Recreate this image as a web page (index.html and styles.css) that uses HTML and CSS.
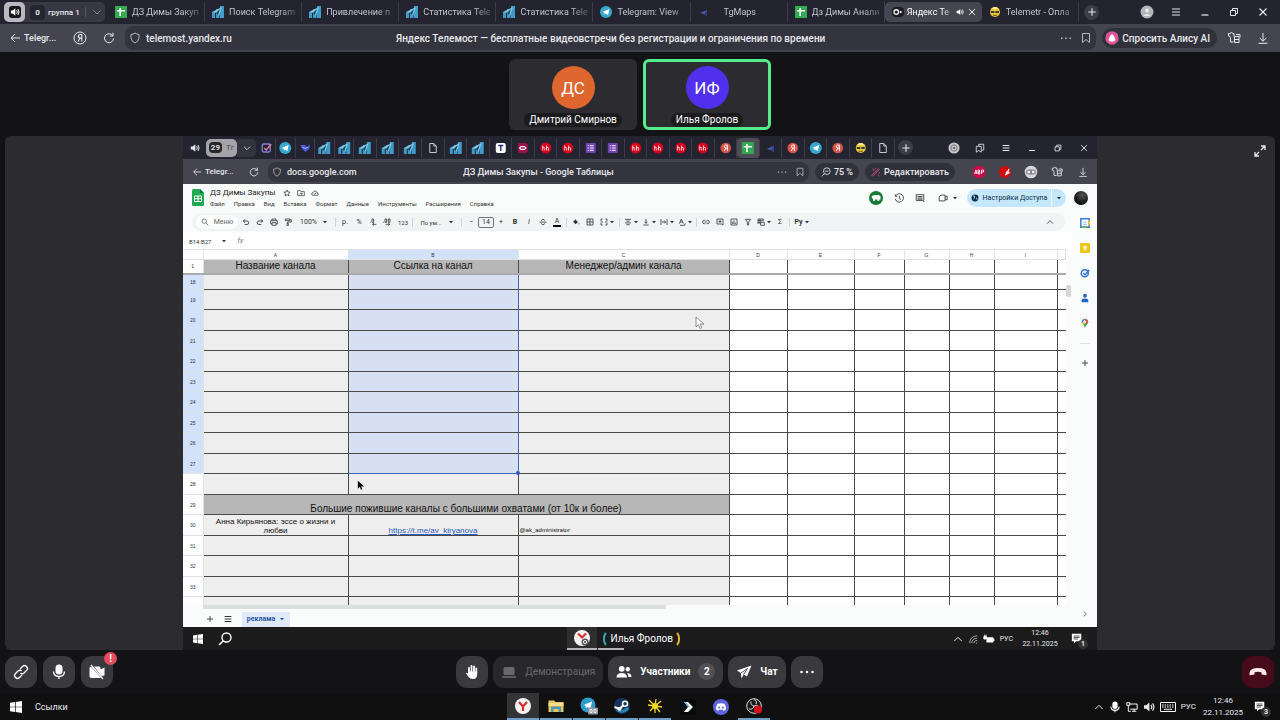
FILE: index.html
```html
<!DOCTYPE html>
<html lang="ru">
<head>
  <meta charset="UTF-8">
  <meta name="viewport" content="width=device-width, initial-scale=1.0">
  <title>Яндекс Телемост</title>
  <link rel="stylesheet" href="styles.css">
</head>
<body>

<!-- Набор иконок -->
<svg class="sprite" aria-hidden="true">
  <symbol id="i-speaker" viewBox="0 0 12 12"><path d="M1 4.2h2.2L6.4 1.5v9L3.2 7.8H1z" fill="currentColor"/><path d="M8 3.8q1.6 2.2 0 4.4M9.6 2.4q2.6 3.6 0 7.2" fill="none" stroke="currentColor" stroke-width="1.2"/></symbol>
  <symbol id="i-chev" viewBox="0 0 12 12"><path d="M2.5 4.5 6 8l3.5-3.5" fill="none" stroke="currentColor"/></symbol>
  <symbol id="i-up" viewBox="0 0 12 12"><path d="M1.5 8.5 6 4l4.5 4.5" fill="none" stroke="currentColor" stroke-width="1.2"/></symbol>
  <symbol id="i-sheet" viewBox="0 0 12 12"><path d="M0 0h12v12H0z" fill="#35a853"/><path d="M5.2 2v8M2 4.8h8" stroke="#fff" stroke-width="1.6"/></symbol>
  <symbol id="i-stat" viewBox="0 0 12 12"><path d="M0 6h3v6H0zM4 3h3.500v9H4zM8 0h4v12H8z" fill="#3f9cc9"/><path d="M0 6 10 1 7 10 5 7z" fill="#7cc8e8"/><path d="m4 7 4-4-2 6z" fill="#17425c"/></symbol>
  <symbol id="i-tg" viewBox="0 0 12 12"><circle cx="6" cy="6" r="6" fill="#35a9cf"/><path d="m2.3 6 7-3-1.2 6.3-2.3-1.8-1.1 1.1-.3-2z" fill="#fff"/></symbol>
  <symbol id="i-plane" viewBox="0 0 12 12"><path d="m2 7 7-3v6L6 8z" fill="#4a61b0"/><path d="m6 8 3-4v6z" fill="#2d3d82"/></symbol>
  <symbol id="i-tele" viewBox="0 0 12 12"><rect y="1" width="12" height="10" rx="4" fill="#1b1b20"/><circle cx="4.3" cy="6" r="2.300" fill="none" stroke="#eee" stroke-width="1.4"/><path d="M1 6h1.500M8 4.700 10.500 6 8 7.300z" fill="#fff"/></symbol>
  <symbol id="i-face" viewBox="0 0 12 12"><circle cx="6" cy="6" r="5" fill="#e8c93c"/><path d="M2 5h3.500v2H2zM6.500 5H10v2H6.500z" fill="#383838"/><path d="M4 9q2 1 4 0" stroke="#6b5410" fill="none"/><path d="M2 3q4-4 8 0z" fill="#fff0a0"/></symbol>
  <symbol id="i-plus" viewBox="0 0 12 12"><path d="M6 1.500v9M1.500 6h9" stroke="currentColor" stroke-width="1.300"/></symbol>
  <symbol id="i-user" viewBox="0 0 14 14"><circle cx="7" cy="7" r="6.500" fill="#b4b4bc"/><circle cx="7" cy="5.500" r="2" fill="#e7e7ec"/><path d="M3.200 11q3.800-4 7.600 0z" fill="#e7e7ec"/></symbol>
  <symbol id="i-menu" viewBox="0 0 12 12"><path d="M2 3h8M2 6h8M2 9h8" stroke="currentColor" stroke-width="1.200"/></symbol>
  <symbol id="i-min" viewBox="0 0 12 12"><path d="M2.500 9h7" stroke="currentColor" stroke-width="1.200"/></symbol>
  <symbol id="i-rest" viewBox="0 0 12 12"><path d="M2.500 4.500h5v5h-5zM4.500 4.500v-2h5v5h-2" fill="none" stroke="currentColor"/></symbol>
  <symbol id="i-x" viewBox="0 0 12 12"><path d="m2.500 2.500 7 7m0-7-7 7" stroke="currentColor" stroke-width="1.100"/></symbol>
  <symbol id="i-back" viewBox="0 0 12 12"><path d="M11 6H2m4-4L2 6l4 4" fill="none" stroke="currentColor"/></symbol>
  <symbol id="i-ya" viewBox="0 0 14 14"><circle cx="7" cy="7" r="6" fill="none" stroke="currentColor"/><path d="M8.800 10.500v-7H7.300Q5.200 3.600 5.200 5.400 5.300 7.200 8.800 7.200M7 7l-2 3.500" fill="none" stroke="currentColor" stroke-width="1.100"/></symbol>
  <symbol id="i-reload" viewBox="0 0 12 12"><path d="M10.500 6.500A4.500 4.500 0 1 1 8.800 2.700L10 4M10 .8V4H6.800" fill="none" stroke="currentColor"/></symbol>
  <symbol id="i-shield" viewBox="0 0 12 12"><path d="M6 1q2 1.500 4 1.500v3.300Q9.700 9.500 6 11 2.300 9.500 2 5.800V2.500Q4 2.500 6 1z" fill="none" stroke="currentColor"/></symbol>
  <symbol id="i-mark" viewBox="0 0 12 12"><path d="M2.500 1.500h7v9L6 7.500l-3.500 3z" fill="none" stroke="currentColor"/></symbol>
  <symbol id="i-dots" viewBox="0 0 12 12"><path d="M1 5.500h1.500v1.500H1zM5.200 5.500h1.500v1.500H5.200zM9.500 5.500H11v1.500H9.500z" fill="currentColor"/></symbol>
  <symbol id="i-alice" viewBox="0 0 14 14"><circle cx="7" cy="7" r="6.700" fill="#dc5596"/><path d="M7 3.200q1 0 2.800 3.700 2 3.600-2.800 3.600T4.200 6.900Q6 3.200 7 3.200z" fill="#fff"/></symbol>
  <symbol id="i-ext" viewBox="0 0 14 14"><path d="M1.500 2.500h2a1 1 0 0 1 2 0h1.500v3M1.500 2.500v2.500q2 0 2 1.500V11h3M7.500 5.500H12v6H7.500zM7.500 8.500H12M9 3.500h4v3" fill="none" stroke="currentColor"/></symbol>
  <symbol id="i-down" viewBox="0 0 12 12"><path d="M6 1v8M2.700 6 6 9.200 9.300 6M1.500 11.300h9" fill="none" stroke="currentColor"/></symbol>
  <symbol id="i-expand" viewBox="0 0 12 12"><path d="M7 1h4v4M11 1 7 5M5 11H1V7m0 4 4-4" fill="none" stroke="currentColor" stroke-width="1.300"/></symbol>
  <symbol id="i-file" viewBox="0 0 12 12"><path d="M3 1.500h4L9.500 4v6.500H3zM7 1.500V4h2.500" fill="none" stroke="#c9c9cf"/></symbol>
  <symbol id="i-t" viewBox="0 0 12 12"><rect x="1" y="1" width="10" height="10" rx="2" fill="#fff"/><path d="M3.500 3.500h5M6 3.500v5.500" stroke="#27277c" stroke-width="1.400"/></symbol>
  <symbol id="i-pink" viewBox="0 0 12 12"><rect x="1" y="1" width="10" height="10" rx="2" fill="#98104c"/><path d="m2 6 2-2h4l2 2-2 2H4z" fill="#fff"/><path d="M4 6h4" stroke="#98104c" stroke-width="1.500"/></symbol>
  <symbol id="i-hh" viewBox="0 0 12 12"><circle cx="6" cy="6" r="5.500" fill="#d6001c"/><path d="M3 3.500v5M3 6q2-1.500 2 .5v2M6.800 3.500v5M6.800 6q2-1.500 2 .5v2" fill="none" stroke="#fff" stroke-width=".8"/></symbol>
  <symbol id="i-form" viewBox="0 0 12 12"><rect x="1" y="1" width="10" height="10" rx="1" fill="#6f42b5"/><path d="M3 3.700h1M5 3.700h4M3 6h1M5 6h4M3 8.300h1M5 8.300h4" stroke="#fff"/></symbol>
  <symbol id="i-yared" viewBox="0 0 12 12"><circle cx="6" cy="6" r="5.300" fill="#d9534a"/><path d="M7.600 9V3H6.200Q4.500 3.200 4.500 4.700T7.600 6.200M6 6.200 4.500 9" fill="none" stroke="#fff"/></symbol>
  <symbol id="i-check" viewBox="0 0 12 12"><rect x="2" y="2" width="8" height="8" rx="1.500" fill="none" stroke="#8a83e0" stroke-width="1.300"/><path d="m4 6 2 2 5-6" fill="none" stroke="#e87c9b" stroke-width="1.300"/></symbol>
  <symbol id="i-bird" viewBox="0 0 12 12"><path d="M1 3h5l2 2 3-3-1 5-4 3-3-3z" fill="#4757d6"/><path d="M3 5q3 3 6 0" stroke="#a3b1ff" fill="none"/></symbol>
  <symbol id="i-group" viewBox="0 0 12 12"><path d="M4.500 4V1.500h6v7H8.500M1.500 4h6v7L4.500 9l-3 2z" fill="none" stroke="currentColor"/></symbol>
  <symbol id="i-round" viewBox="0 0 14 14"><circle cx="7" cy="7" r="6.500" fill="#c8c8cc"/><circle cx="7" cy="7" r="3.700" fill="none" stroke="#65656d"/><circle cx="7" cy="7" r="1.400" fill="#65656d"/></symbol>
  <symbol id="i-zoom" viewBox="0 0 12 12"><circle cx="7" cy="5" r="4" fill="none" stroke="currentColor"/><path d="M4.200 8 1 11.300M5 5h4" stroke="currentColor"/></symbol>
  <symbol id="i-wand" viewBox="0 0 12 12"><path d="m1 10 8-8 1 1-8 8zM2 2l2 3M5 1v2M8 9l2 2M9 7h2" fill="none" stroke="#c9508c"/></symbol>
  <symbol id="i-abp" viewBox="0 0 14 14"><path d="M4 1h6l3 3v6l-3 3H4l-3-3V4z" fill="#c70d47"/><path d="M2.500 9 4 5l1 4M3 8h2M6 9V5h1.500v2H6h1.800v2zM9.500 9V5h2v2h-2" fill="none" stroke="#fff" stroke-width=".8"/></symbol>
  <symbol id="i-red" viewBox="0 0 14 14"><circle cx="7" cy="7" r="6" fill="#d30909"/><path d="m7 10 4.500-2.500M8 8.500 11 7M9.500 7l1.500-3M8.500 6.500l-.5 3" fill="none" stroke="#fff" stroke-width="1.300"/></symbol>
  <symbol id="i-mask" viewBox="0 0 14 14"><circle cx="7" cy="7" r="6.300" fill="#d8d8dc"/><rect x="2" y="4.500" width="10" height="5" rx="2.500" fill="#85858d"/><circle cx="4.700" cy="7" r="1.300" fill="#fff"/><circle cx="9.300" cy="7" r="1.300" fill="#fff"/></symbol>
  <symbol id="i-star" viewBox="0 0 12 12"><path d="m6 1.500 1.400 3 3.300.3-2.500 2.200.8 3.300L6 8.600l-3 1.700.8-3.300L1.300 4.800l3.300-.3z" fill="none" stroke="currentColor"/></symbol>
  <symbol id="i-folder" viewBox="0 0 12 12"><path d="M1 2.500h4l1 1.500h5v6H1zM4 7h4M6.500 5.500 8 7 6.500 8.500" fill="none" stroke="currentColor"/></symbol>
  <symbol id="i-cloud" viewBox="0 0 12 12"><path d="M3.500 9.500q-2.500 0-2.500-2T3.300 5.300Q4 3 6.200 3T9 5.700q2 .2 2 2t-2 1.800zM4.200 6.800l1.300 1.200 2.300-2.500" fill="none" stroke="currentColor"/></symbol>
  <symbol id="i-gsheet" viewBox="0 0 12 17"><path d="M1.500 0H8l4 4v11.500q0 1.500-1.500 1.500h-9Q0 17 0 15.500v-14Q0 0 1.500 0z" fill="#1faa53"/><path d="M8 0v4h4z" fill="#0b7a38"/><path d="M2.500 7h7v5.500h-7zM2.500 9.700h7M6 7v5.500" fill="none" stroke="#fff"/></symbol>
  <symbol id="i-hist" viewBox="0 0 12 12"><path d="M2 3.500a5 5 0 1 1-.5 3.500M1.500 1.500V4H4M6.500 3.500V6.500l2 1.300" fill="none" stroke="currentColor"/></symbol>
  <symbol id="i-cmt" viewBox="0 0 12 12"><path d="M1.500 2h9v8.500L8.800 9H1.500zM3 4.200h6M3 6h6M3 7.500h6" fill="none" stroke="currentColor"/></symbol>
  <symbol id="i-meet" viewBox="0 0 12 12"><path d="M1.500 9.500V4.500l2-2h5v7zM8.500 5l2.500-1.500v5L8.500 7" fill="none" stroke="currentColor"/></symbol>
  <symbol id="i-pig" viewBox="0 0 14 14"><circle cx="7" cy="7" r="7" fill="#187a35"/><path d="M2.500 6q1-2 3-2h3q2.500-.5 3.200 2l-.2 2.500h-1L10 10H8.500L8.200 8.500H6L5.800 10H4.300L4 8.300z" fill="#fff"/></symbol>
  <symbol id="i-globe" viewBox="0 0 12 12"><circle cx="6" cy="6" r="5.200" fill="#0b2c46"/><path d="M3 3q3-1 2.500 1.500T3.500 8M7.500 6q2 0 1.500 2.500" fill="none" stroke="#c2e7ff" stroke-width="1.300"/></symbol>
  <symbol id="i-caret" viewBox="0 0 6 6"><path d="M1 2h4L3 4.200z" fill="currentColor"/></symbol>
  <symbol id="i-search" viewBox="0 0 12 12"><circle cx="4.800" cy="4.800" r="3.300" fill="none" stroke="currentColor" stroke-width="1.200"/><path d="M7.300 7.300 11 11" stroke="currentColor" stroke-width="1.200"/></symbol>
  <symbol id="i-undo" viewBox="0 0 12 12"><path d="M2 4.500h5.500a2.600 2.600 0 0 1 0 5.200H4M4.500 2 2 4.500 4.500 7" fill="none" stroke="currentColor" stroke-width="1.300"/></symbol>
  <symbol id="i-redo" viewBox="0 0 12 12"><path d="M10 4.500H4.500a2.600 2.600 0 0 0 0 5.200H8M7.500 2 10 4.500 7.500 7" fill="none" stroke="currentColor" stroke-width="1.300"/></symbol>
  <symbol id="i-print" viewBox="0 0 12 12"><path d="M3 4V1.500h6V4M3 9H1V4h10v5H9M3 7h6v4H3z" fill="none" stroke="currentColor" stroke-width="1.200"/></symbol>
  <symbol id="i-paint" viewBox="0 0 12 12"><path d="M2 1.500h7V4H2zM9 2.700h2V6H5.500v2M4.500 8h2v3.500h-2z" fill="none" stroke="currentColor" stroke-width="1.200"/></symbol>
  <symbol id="i-strike" viewBox="0 0 12 12"><path d="M1 6.200h10M8.500 4Q8 2 6 2T3.700 4M3.500 8Q4 10 6 10t2.500-2" fill="none" stroke="currentColor" stroke-width="1.200"/></symbol>
  <symbol id="i-fill" viewBox="0 0 12 12"><path d="m4 1 5 5-3.500 3.500-4-4L6 2z" fill="currentColor"/><path d="M10.500 7q1.500 2 0 2.500T10.500 7z" fill="currentColor"/></symbol>
  <symbol id="i-grid" viewBox="0 0 12 12"><path d="M1.500 1.500h9v9h-9zM6 1.500v9M1.500 6h9" fill="none" stroke="currentColor" stroke-width="1.200"/></symbol>
  <symbol id="i-merge" viewBox="0 0 12 12"><path d="M4 1.500H1.500v3M8 1.500h2.500v3M4 10.500H1.500v-3M8 10.500h2.500v-3M1 6h3.500M11 6H7.500" fill="none" stroke="currentColor" stroke-width="1.200"/></symbol>
  <symbol id="i-align" viewBox="0 0 12 12"><path d="M1.500 2h9M3.500 4.700h5M1.500 7.400h9M3.500 10h5" stroke="currentColor" stroke-width="1.200"/></symbol>
  <symbol id="i-valign" viewBox="0 0 12 12"><path d="M2 10.500h8M6 1.500V8M3.800 6 6 8l2.200-2" fill="none" stroke="currentColor" stroke-width="1.200"/></symbol>
  <symbol id="i-wrap" viewBox="0 0 12 12"><path d="M1.500 1.500v9M10.500 1.500v9M3 6h5M6.500 4l2 2-2 2" fill="none" stroke="currentColor" stroke-width="1.200"/></symbol>
  <symbol id="i-rot" viewBox="0 0 12 12"><path d="m2 8.500 3-7 3 7M3 6h4M3 11h7l1-3" fill="none" stroke="currentColor" stroke-width="1.200"/></symbol>
  <symbol id="i-dec" viewBox="0 0 12 12"><path d="M1.500 6.500h1M4.500 1.500h2.500v5H4.500zM5.500 9.500H11M7.500 7.500l-2 2 2 2" fill="none" stroke="currentColor" stroke-width="1.200"/></symbol>
  <symbol id="i-inc" viewBox="0 0 12 12"><path d="M.5 6.500h1M3 1.500h2.500v5H3zM8 1.500h2.500v5H8zM4 9.500h6M8 7.500l2 2-2 2" fill="none" stroke="currentColor" stroke-width="1.200"/></symbol>
  <symbol id="i-chain" viewBox="0 0 12 12"><path d="M5 3.500H3.500a2.500 2.500 0 0 0 0 5H5M7 3.500h1.500a2.500 2.500 0 0 1 0 5H7M4 6h4" fill="none" stroke="currentColor" stroke-width="1.200"/></symbol>
  <symbol id="i-addc" viewBox="0 0 12 12"><path d="M1.500 1.500h9v9L8.500 9h-7zM6 3v4.500M3.700 5.200h4.600" fill="none" stroke="currentColor" stroke-width="1.200"/></symbol>
  <symbol id="i-chart" viewBox="0 0 12 12"><path d="M1.500 1.500h9v9h-9zM4 9V5.500M6 9V3.500M8 9V7" fill="none" stroke="currentColor" stroke-width="1.200"/></symbol>
  <symbol id="i-filter" viewBox="0 0 12 12"><path d="M2 2h8L7 6v4.500H5V6z" fill="none" stroke="currentColor" stroke-width="1.200"/></symbol>
  <symbol id="i-tbl" viewBox="0 0 12 12"><path d="M1.500 9V1.500h8V4M1.500 4h8M1.500 6.500H5M4.500 1.500V9M5.500 6.500H11V11H5.500z" fill="none" stroke="currentColor" stroke-width="1.200"/></symbol>
  <symbol id="i-cal" viewBox="0 0 12 12"><path d="M1 1h10v10H1z" fill="#fff" stroke="#3879dd" stroke-width="1.800"/><path d="M11 3v6" stroke="#f1c232" stroke-width="2"/><path d="M2 11h7" stroke="#5fb276" stroke-width="2"/><path d="M4 5h4M4 7.500h4" stroke="#7eacea"/></symbol>
  <symbol id="i-keep" viewBox="0 0 12 12"><rect width="12" height="12" rx="1.500" fill="#eec71e"/><circle cx="6" cy="5.300" r="2.400" fill="#fff6c4"/><path d="M5 8.500h2" stroke="#fff"/></symbol>
  <symbol id="i-task" viewBox="0 0 12 12"><circle cx="5.700" cy="6.300" r="4.200" fill="none" stroke="#2a73d8" stroke-width="1.800"/><path d="m4 6 2 2 5-5.500" fill="none" stroke="#2a73d8" stroke-width="1.700"/></symbol>
  <symbol id="i-pers" viewBox="0 0 12 12"><circle cx="6" cy="3.300" r="2.300" fill="#1d64c6"/><path d="M2 11V9q0-2.500 4-2.500T10 9v2z" fill="#1d64c6"/></symbol>
  <symbol id="i-pin" viewBox="0 0 12 12"><path d="M6 12Q5.500 9.500 3.500 7.500L8 2l1 5q-2.500 2-3 5z" fill="#34a353"/><path d="M6 1a4 4 0 0 0-3.700 5.500L6.500 1z" fill="#3b78e0"/><path d="M6 1q4 .5 4 4L9 7 6.500 5z" fill="#e0513f"/><path d="m2.500 6.500 2-2 1.500 2-2 2z" fill="#f2bd2c"/><circle cx="6" cy="5" r="1.300" fill="#fff"/></symbol>
  <symbol id="i-win" viewBox="0 0 12 12"><path d="m0 1.700 5-.7v4.700H0zM5.700.9 12 0v5.700H5.700zM0 6.300h5V11l-5-.7zM5.700 6.300H12V12l-6.300-.9z" fill="#fff"/></symbol>
  <symbol id="i-find" viewBox="0 0 14 14"><circle cx="8.500" cy="5.500" r="4.500" fill="none" stroke="#fff" stroke-width="1.400"/><path d="M5.300 8.700 1 13" stroke="#fff" stroke-width="1.600"/></symbol>
  <symbol id="i-note" viewBox="0 0 14 14"><path d="M1 1h11v8.500H6L3.500 12V9.500H1z" fill="#fff"/><path d="M3 3.500h7M3 5.300h7M3 7h5" stroke="#222" stroke-width=".9"/></symbol>
  <symbol id="i-wifi" viewBox="0 0 12 12"><path d="M2 11q0-8 9-9M4.500 11q0-5.500 6.500-6M7 11q0-3 4-3.500M9.500 11h1.500" fill="none" stroke="#bbb"/></symbol>
  <symbol id="i-bat" viewBox="0 0 14 12"><path d="M4 4h8v1.500h1.200v3H12V10H4z" fill="#fff"/><path d="M1 3h3v3H1zM2 1v2M3.500 1v2" fill="#fff" stroke="#fff"/></symbol>
  <symbol id="i-link" viewBox="0 0 16 16"><path d="m7 5 2.500-2.500a2.800 2.800 0 0 1 4 4L11 9q-1.800 1.500-3.600.2M9 11l-2.500 2.500a2.800 2.800 0 0 1-4-4L5 7q1.800-1.500 3.600-.2" fill="none" stroke="#fff" stroke-width="1.400"/></symbol>
  <symbol id="i-mic" viewBox="0 0 16 16"><rect x="4.500" y=".5" width="7" height="10" rx="3.500" fill="#fff"/><path d="M2.500 7.500q.3 5 5.500 5t5.500-5M8 12.500V15" fill="none" stroke="#fff" stroke-width="1.400"/></symbol>
  <symbol id="i-cam" viewBox="0 0 16 16"><path d="M.5 4Q.5 2.500 2 2.500L12 14H2.500q-2 0-2-2zM5 2.500h5q1.500 0 1.500 1.500v1.500l4-2v8l-3 .5z" fill="#fff"/><path d="m2 1 12 14" stroke="#fff" stroke-width="1.300"/></symbol>
  <symbol id="i-hand" viewBox="0 0 16 16"><path d="M5 9V4M7.500 8V2M10 8V2.500M12.300 9V4.500" stroke="#fff" stroke-width="1.800" stroke-linecap="round"/><path d="M4 7.500h9.200V10q0 5-4.200 5-3 0-4.500-2L2 9.300Q2.500 8 4 9.500z" fill="#fff"/></symbol>
  <symbol id="i-screen" viewBox="0 0 16 16"><rect x="2.500" y="3" width="11" height="8" rx="1.500" fill="#68686c"/><path d="M1 13h14" stroke="#68686c" stroke-width="1.600"/></symbol>
  <symbol id="i-people" viewBox="0 0 16 16"><circle cx="5.700" cy="4.800" r="2.900" fill="#fff"/><path d="M.5 13.500q0-4.500 5.200-4.500t5.300 4.500z" fill="#fff"/><circle cx="11.800" cy="5.200" r="2.200" fill="#fff"/><path d="M12.300 13q.2-2.500-1.300-3.800 4.500-.5 4.500 3.800z" fill="#fff"/></symbol>
  <symbol id="i-send" viewBox="0 0 16 16"><path d="M1 6.500 15.500 1.500 11 12.500 7.700 10.500 5.500 14.500 4.800 9z" fill="#fff"/><path d="m5 9 6.500-4.500-4 6" fill="none" stroke="#3a3a3e" stroke-width=".9"/></symbol>
  <symbol id="i-more" viewBox="0 0 16 16"><circle cx="2.500" cy="8" r="1.300" fill="#fff"/><circle cx="8" cy="8" r="1.300" fill="#fff"/><circle cx="13.500" cy="8" r="1.300" fill="#fff"/></symbol>
  <symbol id="i-end" viewBox="0 0 18 12"><path d="M.5 7Q1 2 9 2t8.500 5v2.300l-5-.8V6.300q-3.500-1.200-7 0v2.200l-5 .8z" fill="#ffe9ee"/></symbol>
  <symbol id="i-yb" viewBox="0 0 16 16"><circle cx="8" cy="8" r="8" fill="#f6f3f3"/><path d="m4 4 4 4.500L12 4M8 8.500V13" fill="none" stroke="#d93030" stroke-width="2.200"/></symbol>
  <symbol id="i-yb2" viewBox="0 0 16 16"><circle cx="8" cy="8" r="8" fill="#f6f3f3"/><path d="m4 3.500 4 4L12 3.500" fill="none" stroke="#d93030" stroke-width="2.200"/><circle cx="11" cy="12" r="3.500" fill="#55555a"/><circle cx="11" cy="12" r="1.600" fill="none" stroke="#eee"/></symbol>
  <symbol id="i-exp" viewBox="0 0 16 16"><path d="M.5 2.500H6L7.500 4h8v10H.5z" fill="#edc65a"/><path d="M.5 5h15v3H.5z" fill="#f7e08c"/><path d="M3 8.500h10V14h-2.500v-3h-5v3H3z" fill="#4a9ab8"/></symbol>
  <symbol id="i-tgb" viewBox="0 0 18 18"><circle cx="8" cy="8" r="7.500" fill="#2f9ccb"/><path d="m3.500 8 8.500-3.500-1.500 7.500-3-2-1.500 1.300-.4-2.600z" fill="#fff"/><rect x="8" y="10.500" width="10" height="7" rx="1" fill="#8c979f"/><path d="M10 12.500h2v3h-2zM14 12.500h2v3h-2z" fill="none" stroke="#fff" stroke-width=".8"/></symbol>
  <symbol id="i-steam" viewBox="0 0 16 16"><circle cx="8" cy="8" r="8" fill="#17345f"/><path d="M1 12q7 6 14-.5L14 9l-8 4z" fill="#2683b4"/><circle cx="11" cy="5.800" r="2.500" fill="none" stroke="#fff" stroke-width="1.500"/><path d="m.5 9 5 2 4-4" fill="none" stroke="#fff" stroke-width="2"/><circle cx="5.500" cy="11" r="2" fill="#fff"/></symbol>
  <symbol id="i-sun" viewBox="0 0 16 16"><circle cx="8" cy="8" r="3" fill="#efd821"/><path d="m8 8-6-6M8 8 9 1M8 8l6-5M8 8l7 1M8 8l5 6M8 8v7M8 8l-5 5M8 8 1 7" stroke="#efd821" stroke-width="1.300"/></symbol>
  <symbol id="i-arrow" viewBox="0 0 16 16"><rect width="16" height="16" rx="3" fill="#07080c"/><path d="M4 3h4l5 5-5 5H4l4-5z" fill="#fff"/><path d="M4 3h2l4 5h-2z" fill="#7fa8d8"/></symbol>
  <symbol id="i-disc" viewBox="0 0 16 16"><circle cx="8" cy="8" r="8" fill="#5f64e4"/><path d="M4.500 4.800q3.500-1 7 0Q13.300 8 13 10.500L10.800 12 10 10.800H6L5.200 12 3 10.500Q2.700 8 4.500 4.800z" fill="#fff"/><circle cx="6.200" cy="8.500" r="1" fill="#5f64e4"/><circle cx="9.800" cy="8.500" r="1" fill="#5f64e4"/></symbol>
  <symbol id="i-obs" viewBox="0 0 16 16"><circle cx="8" cy="8" r="7.300" fill="#1b1b1b" stroke="#ddd"/><path d="M8 8Q4 7 5 3.500M8 8q4-2 5 1.500M8 8q-1 4-5 3M8 1.500Q12 3 10 6" fill="none" stroke="#ddd"/><circle cx="12" cy="11.500" r="4" fill="#d5101a"/></symbol>
  <symbol id="i-net" viewBox="0 0 14 12"><path d="M4 2.500h9v6H5M7 11h5M9.500 8.500V11M1 1h3.500v3H1zM2.700 4v7h3" fill="none" stroke="#fff" stroke-width="1.100"/></symbol>
  <symbol id="i-kb" viewBox="0 0 16 10"><path d="M.5.5h15v9H.5z" fill="none" stroke="#fff"/><path d="M2 3h12M2 5h12" stroke="#fff" stroke-dasharray="1.500 1"/><path d="M4 7.300h8" stroke="#fff"/></symbol>
</svg>

<div class="page">

  <!-- Вкладки браузера -->
  <header class="tabs">
    <div class="tab-group">
      <button class="group-sound" aria-label="Звук"><svg class="ic"><use href="#i-speaker"/></svg></button>
      <button class="group-name"><b>0</b><span>группа 1</span><i></i><svg class="ic"><use href="#i-chev"/></svg></button>
    </div>
    <nav class="tab-list">
      <a class="tab" href="#"><svg class="ic"><use href="#i-sheet"/></svg><span>ДЗ Димы Закуп</span></a>
      <a class="tab" href="#"><svg class="ic"><use href="#i-stat"/></svg><span>Поиск Telegram</span></a>
      <a class="tab" href="#"><svg class="ic"><use href="#i-stat"/></svg><span>Привлечение п</span></a>
      <a class="tab" href="#"><svg class="ic"><use href="#i-stat"/></svg><span>Статистика Tele</span></a>
      <a class="tab" href="#"><svg class="ic"><use href="#i-stat"/></svg><span>Статистика Tele</span></a>
      <a class="tab" href="#"><svg class="ic"><use href="#i-tg"/></svg><span>Telegram: View</span></a>
      <a class="tab tab-wide" href="#"><svg class="ic"><use href="#i-plane"/></svg><span>TgMaps</span></a>
      <a class="tab" href="#"><svg class="ic"><use href="#i-sheet"/></svg><span>Дз Димы Анали</span></a>
      <a class="tab tab-active" href="#"><svg class="ic"><use href="#i-tele"/></svg><span>Яндекс Те</span><svg class="ic ic-s"><use href="#i-speaker"/></svg><svg class="ic ic-10"><use href="#i-x"/></svg></a>
      <a class="tab" href="#"><svg class="ic"><use href="#i-face"/></svg><span>Telemetr - Опла</span></a>
    </nav>
    <button class="new-tab" aria-label="Новая вкладка"><svg class="ic"><use href="#i-plus"/></svg></button>
    <div class="win-btns">
      <button aria-label="Профиль"><svg class="ic ic-m"><use href="#i-user"/></svg></button>
      <button aria-label="Меню"><svg class="ic"><use href="#i-menu"/></svg></button>
      <button aria-label="Свернуть"><svg class="ic"><use href="#i-min"/></svg></button>
      <button aria-label="Окно"><svg class="ic"><use href="#i-rest"/></svg></button>
      <button aria-label="Закрыть"><svg class="ic"><use href="#i-x"/></svg></button>
    </div>
  </header>

  <!-- Адресная строка -->
  <div class="address">
    <button class="back"><svg class="ic"><use href="#i-back"/></svg>Telegr...</button>
    <button class="nav-btn" aria-label="Яндекс"><svg class="ic ic-m"><use href="#i-ya"/></svg></button>
    <button class="nav-btn" aria-label="Обновить"><svg class="ic"><use href="#i-reload"/></svg></button>
    <div class="field">
      <span class="host"><svg class="ic"><use href="#i-shield"/></svg>telemost.yandex.ru</span>
      <span>Яндекс Телемост — бесплатные видеовстречи без регистрации и ограничения по времени</span>
      <span class="field-end"><svg class="ic"><use href="#i-dots"/></svg><svg class="ic"><use href="#i-mark"/></svg></span>
    </div>
    <button class="alice"><svg class="ic ic-m"><use href="#i-alice"/></svg>Спросить Алису AI</button>
    <div class="win-btns">
      <button aria-label="Расширения"><svg class="ic ic-m"><use href="#i-ext"/></svg></button>
      <button aria-label="Загрузки"><svg class="ic"><use href="#i-down"/></svg></button>
    </div>
  </div>

  <!-- Участники -->
  <section class="people">
    <div class="person"><div class="avatar avatar-orange">ДС</div><span>Дмитрий Смирнов</span></div>
    <div class="person person-talk"><div class="avatar avatar-blue">ИФ</div><span>Илья Фролов</span></div>
  </section>

  <!-- Демонстрация экрана -->
  <main class="stage">
    <button class="expand" aria-label="Развернуть"><svg class="ic"><use href="#i-expand"/></svg></button>
    <div class="screen">

      <div class="tabs tabs-in">
        <button class="in-sound" aria-label="Звук"><svg class="ic"><use href="#i-speaker"/></svg></button>
        <button class="in-group"><b>29</b>Tг</button>
        <button class="in-chev" aria-label="Группа"><svg class="ic"><use href="#i-chev"/></svg></button>
        <div class="mini mini-pin">
          <svg class="ic"><use href="#i-check"/></svg><svg class="ic"><use href="#i-tg"/></svg><svg class="ic"><use href="#i-bird"/></svg><svg class="ic"><use href="#i-stat"/></svg><svg class="ic"><use href="#i-stat"/></svg>
        </div>
        <div class="mini mini-rest">
          <svg class="ic"><use href="#i-stat"/></svg><svg class="ic"><use href="#i-stat"/></svg><svg class="ic"><use href="#i-stat"/></svg><svg class="ic"><use href="#i-file"/></svg><svg class="ic"><use href="#i-stat"/></svg><svg class="ic"><use href="#i-stat"/></svg>
          <svg class="ic"><use href="#i-t"/></svg><svg class="ic"><use href="#i-pink"/></svg><svg class="ic"><use href="#i-hh"/></svg><svg class="ic"><use href="#i-hh"/></svg><svg class="ic"><use href="#i-form"/></svg><svg class="ic"><use href="#i-form"/></svg>
          <svg class="ic"><use href="#i-hh"/></svg><svg class="ic"><use href="#i-hh"/></svg><svg class="ic"><use href="#i-hh"/></svg><svg class="ic"><use href="#i-hh"/></svg><svg class="ic"><use href="#i-yared"/></svg><svg class="ic mini-active"><use href="#i-sheet"/></svg>
          <svg class="ic"><use href="#i-plane"/></svg><svg class="ic"><use href="#i-yared"/></svg><svg class="ic"><use href="#i-tg"/></svg><svg class="ic"><use href="#i-yared"/></svg><svg class="ic"><use href="#i-face"/></svg><svg class="ic"><use href="#i-file"/></svg>
        </div>
        <button class="new-tab new-tab-in" aria-label="Новая вкладка"><svg class="ic"><use href="#i-plus"/></svg></button>
        <div class="win-btns win-btns-in">
          <button aria-label="Профиль"><svg class="ic"><use href="#i-round"/></svg></button>
          <button aria-label="Вкладки"><svg class="ic ic-10"><use href="#i-group"/></svg></button>
          <button aria-label="Меню"><svg class="ic ic-10"><use href="#i-menu"/></svg></button>
          <button aria-label="Свернуть"><svg class="ic ic-10"><use href="#i-min"/></svg></button>
          <button aria-label="Окно"><svg class="ic ic-10"><use href="#i-rest"/></svg></button>
          <button aria-label="Закрыть"><svg class="ic ic-10"><use href="#i-x"/></svg></button>
        </div>
      </div>

      <div class="address address-in">
        <button class="back"><svg class="ic"><use href="#i-back"/></svg>Telegr...</button>
        <button class="nav-btn" aria-label="Обновить"><svg class="ic ic-10"><use href="#i-reload"/></svg></button>
        <div class="field">
          <span class="host"><svg class="ic ic-10"><use href="#i-shield"/></svg>docs.google.com</span>
          <span>ДЗ Димы Закупы - Google Таблицы</span>
          <span class="field-end"><svg class="ic ic-10"><use href="#i-dots"/></svg><svg class="ic ic-10"><use href="#i-mark"/></svg></span>
        </div>
        <button class="alice"><svg class="ic ic-10"><use href="#i-zoom"/></svg>75 %</button>
        <button class="alice edit"><svg class="ic ic-10"><use href="#i-wand"/></svg>Редактировать</button>
        <div class="win-btns win-btns-in">
          <button aria-label="ABP"><svg class="ic ic-m"><use href="#i-abp"/></svg></button>
          <button aria-label="Блокировщик"><svg class="ic ic-m"><use href="#i-red"/></svg></button>
          <button aria-label="Маска"><svg class="ic ic-m"><use href="#i-mask"/></svg></button>
          <button aria-label="Расширения"><svg class="ic"><use href="#i-ext"/></svg></button>
          <button aria-label="Загрузки"><svg class="ic ic-10"><use href="#i-down"/></svg></button>
        </div>
      </div>

      <div class="docs">
        <div class="docs-head">
          <svg class="docs-logo"><use href="#i-gsheet"/></svg>
          <div class="docs-name">
            <h1><span>ДЗ Димы Закупы</span><svg class="ic ic-s"><use href="#i-star"/></svg><svg class="ic ic-s"><use href="#i-folder"/></svg><svg class="ic ic-s"><use href="#i-cloud"/></svg></h1>
            <nav class="docs-menu"><a href="#">Файл</a><a href="#">Правка</a><a href="#">Вид</a><a href="#">Вставка</a><a href="#">Формат</a><a href="#">Данные</a><a href="#">Инструменты</a><a href="#">Расширения</a><a href="#">Справка</a></nav>
          </div>
          <div class="docs-actions">
            <svg class="ic ic-m"><use href="#i-pig"/></svg>
            <svg class="ic ic-10"><use href="#i-hist"/></svg>
            <svg class="ic ic-10"><use href="#i-cmt"/></svg>
            <span class="meet"><svg class="ic ic-10"><use href="#i-meet"/></svg><svg class="caret"><use href="#i-caret"/></svg></span>
          </div>
          <button class="share"><svg class="ic ic-s"><use href="#i-globe"/></svg><span>Настройки Доступа</span><i></i><svg class="caret"><use href="#i-caret"/></svg></button>
          <div class="me"></div>
        </div>

        <div class="docs-body">
          <div class="docs-main">
            <div class="toolbar">
              <button class="tb-search"><svg class="ic ic-s"><use href="#i-search"/></svg>Меню</button>
              <button aria-label="Отменить"><svg class="ic ic-s"><use href="#i-undo"/></svg></button>
              <button aria-label="Повторить"><svg class="ic ic-s"><use href="#i-redo"/></svg></button>
              <button aria-label="Печать"><svg class="ic ic-s"><use href="#i-print"/></svg></button>
              <button aria-label="Формат"><svg class="ic ic-s"><use href="#i-paint"/></svg></button>
              <button class="tb-zoom">100%<svg class="caret"><use href="#i-caret"/></svg></button>
              <i class="sep"></i>
              <button>р.</button><button>%</button>
              <button aria-label="Меньше знаков"><svg class="ic ic-s"><use href="#i-dec"/></svg></button>
              <button aria-label="Больше знаков"><svg class="ic ic-s"><use href="#i-inc"/></svg></button>
              <button class="tb-123">123</button>
              <i class="sep"></i>
              <button class="tb-font">По ум...<svg class="caret"><use href="#i-caret"/></svg></button>
              <i class="sep"></i>
              <button>−</button><input class="tb-size" value="14" aria-label="Размер шрифта"><button>+</button>
              <button><b>B</b></button><button><em>I</em></button>
              <button aria-label="Зачеркнуть"><svg class="ic ic-s"><use href="#i-strike"/></svg></button>
              <button><u class="tb-color">A</u></button>
              <i class="sep"></i>
              <button aria-label="Заливка"><svg class="ic ic-s"><use href="#i-fill"/></svg></button>
              <button aria-label="Границы"><svg class="ic ic-s"><use href="#i-grid"/></svg></button>
              <button class="tb-20" aria-label="Объединить"><svg class="ic ic-s"><use href="#i-merge"/></svg><svg class="caret"><use href="#i-caret"/></svg></button>
              <i class="sep"></i>
              <button class="tb-18" aria-label="По горизонтали"><svg class="ic ic-s"><use href="#i-align"/></svg><svg class="caret"><use href="#i-caret"/></svg></button>
              <button class="tb-18" aria-label="По вертикали"><svg class="ic ic-s"><use href="#i-valign"/></svg><svg class="caret"><use href="#i-caret"/></svg></button>
              <button class="tb-18" aria-label="Перенос"><svg class="ic ic-s"><use href="#i-wrap"/></svg><svg class="caret"><use href="#i-caret"/></svg></button>
              <button class="tb-18" aria-label="Поворот"><svg class="ic ic-s"><use href="#i-rot"/></svg><svg class="caret"><use href="#i-caret"/></svg></button>
              <i class="sep"></i>
              <button aria-label="Ссылка"><svg class="ic ic-s"><use href="#i-chain"/></svg></button>
              <button aria-label="Комментарий"><svg class="ic ic-s"><use href="#i-addc"/></svg></button>
              <button aria-label="Диаграмма"><svg class="ic ic-s"><use href="#i-chart"/></svg></button>
              <button aria-label="Фильтр"><svg class="ic ic-s"><use href="#i-filter"/></svg></button>
              <button class="tb-18" aria-label="Таблица"><svg class="ic ic-s"><use href="#i-tbl"/></svg><svg class="caret"><use href="#i-caret"/></svg></button>
              <button>Σ</button>
              <i class="sep"></i>
              <button class="tb-20"><b>Py</b><svg class="caret"><use href="#i-caret"/></svg></button>
              <button class="tb-hide" aria-label="Скрыть"><svg class="ic ic-s"><use href="#i-up"/></svg></button>
            </div>

            <div class="formula"><span>B14:B27</span><svg class="caret"><use href="#i-caret"/></svg><em>fx</em></div>

            <div class="grid-wrap">
              <div class="grid-view">
              <table class="grid">
                <colgroup><col class="w20"><col class="w145"><col class="w170"><col class="w211"><col class="w58"><col class="w67"><col class="w50"><col class="w45"><col class="w45"><col class="w63"><col></colgroup>
                <thead>
                  <tr class="letters"><th></th><th>A</th><th class="on">B</th><th>C</th><th>D</th><th>E</th><th>F</th><th>G</th><th>H</th><th>I</th><th></th></tr>
                  <tr class="titles"><th>1</th><td>Название канала</td><td>Ссылка на канал</td><td>Менеджер/админ канала</td><td></td><td></td><td></td><td></td><td></td><td></td><td></td></tr>
                </thead>
                <tbody>
                  <tr class="sel first"><th>18</th><td></td><td></td><td></td><td></td><td></td><td></td><td></td><td></td><td></td><td></td></tr>
                  <tr class="sel"><th>19</th><td></td><td></td><td></td><td></td><td></td><td></td><td></td><td></td><td></td><td></td></tr>
                  <tr class="sel"><th>20</th><td></td><td></td><td></td><td></td><td></td><td></td><td></td><td></td><td></td><td></td></tr>
                  <tr class="sel"><th>21</th><td></td><td></td><td></td><td></td><td></td><td></td><td></td><td></td><td></td><td></td></tr>
                  <tr class="sel"><th>22</th><td></td><td></td><td></td><td></td><td></td><td></td><td></td><td></td><td></td><td></td></tr>
                  <tr class="sel"><th>23</th><td></td><td></td><td></td><td></td><td></td><td></td><td></td><td></td><td></td><td></td></tr>
                  <tr class="sel"><th>24</th><td></td><td></td><td></td><td></td><td></td><td></td><td></td><td></td><td></td><td></td></tr>
                  <tr class="sel"><th>25</th><td></td><td></td><td></td><td></td><td></td><td></td><td></td><td></td><td></td><td></td></tr>
                  <tr class="sel"><th>26</th><td></td><td></td><td></td><td></td><td></td><td></td><td></td><td></td><td></td><td></td></tr>
                  <tr class="sel last"><th>27</th><td></td><td><i class="handle"></i></td><td></td><td></td><td></td><td></td><td></td><td></td><td></td><td></td></tr>
                  <tr><th>28</th><td></td><td></td><td></td><td></td><td></td><td></td><td></td><td></td><td></td><td></td></tr>
                  <tr class="part"><th>29</th><td colspan="3">Большие пожившие каналы с большими охватами (от 10к и более)</td><td></td><td></td><td></td><td></td><td></td><td></td><td></td></tr>
                  <tr class="data"><th>30</th><td>Анна Кирьянова: эссе о жизни и любви</td><td><a href="#">https://t.me/av_kiryanova</a></td><td class="admin">@ak_administrator</td><td></td><td></td><td></td><td></td><td></td><td></td><td></td></tr>
                  <tr><th>31</th><td></td><td></td><td></td><td></td><td></td><td></td><td></td><td></td><td></td><td></td></tr>
                  <tr><th>32</th><td></td><td></td><td></td><td></td><td></td><td></td><td></td><td></td><td></td><td></td></tr>
                  <tr><th>33</th><td></td><td></td><td></td><td></td><td></td><td></td><td></td><td></td><td></td><td></td></tr>
                  <tr class="cut"><th></th><td></td><td></td><td></td><td></td><td></td><td></td><td></td><td></td><td></td><td></td></tr>
                </tbody>
              </table>
              <div class="hscroll"><i></i></div>
              </div>
              <div class="vscroll"><i></i></div>
            </div>

            <div class="sheets">
              <button aria-label="Добавить лист"><svg class="ic ic-s"><use href="#i-plus"/></svg></button>
              <button aria-label="Все листы"><svg class="ic ic-10"><use href="#i-menu"/></svg></button>
              <button class="sheet-on">реклама<svg class="caret"><use href="#i-caret"/></svg></button>
            </div>
          </div>

          <aside class="side">
            <svg class="ic ic-10"><use href="#i-cal"/></svg>
            <svg class="ic ic-10"><use href="#i-keep"/></svg>
            <svg class="ic ic-10"><use href="#i-task"/></svg>
            <svg class="ic ic-10"><use href="#i-pers"/></svg>
            <svg class="ic ic-10"><use href="#i-pin"/></svg>
            <i></i>
            <svg class="ic ic-s"><use href="#i-plus"/></svg>
            <svg class="ic ic-s side-fold"><use href="#i-chev"/></svg>
          </aside>
        </div>
      </div>

      <div class="taskbar taskbar-in">
        <div class="start"><svg class="ic ic-10"><use href="#i-win"/></svg><svg class="ic ic-m"><use href="#i-find"/></svg></div>
        <div class="apps"><button class="app app-on" aria-label="Яндекс Браузер"><svg class="ic ic-16"><use href="#i-yb2"/></svg></button><button class="app app-run" aria-label="Окно"></button></div>
        <div class="tray">
          <svg class="ic ic-10"><use href="#i-up"/></svg><svg class="ic ic-10"><use href="#i-wifi"/></svg><svg class="ic"><use href="#i-bat"/></svg>
          <span>РУС</span><time>12:46<br>22.11.2025</time>
          <span class="note"><svg class="ic"><use href="#i-note"/></svg><b>1</b></span>
        </div>
      </div>
      <span class="speaker-name">Илья Фролов</span>
      <svg class="cursor cursor-me" viewBox="0 0 10 14"><path d="M1 1v10l2.500-2.300L5 12.500l1.700-.7L5.200 8.200H9z" fill="#fff" stroke="#777" stroke-width=".8"/></svg>
      <svg class="cursor cursor-remote" viewBox="0 0 10 14"><path d="M1 1v10l2.500-2.300L5 12.500l1.700-.7L5.200 8.200H9z" fill="#000"/></svg>
    </div>
  </main>

  <!-- Управление встречей -->
  <footer class="controls">
    <div class="ctl-left">
      <button class="ctl" aria-label="Скопировать ссылку"><svg class="ic ic-16"><use href="#i-link"/></svg></button>
      <button class="ctl" aria-label="Микрофон"><svg class="ic ic-16"><use href="#i-mic"/></svg></button>
      <button class="ctl" aria-label="Камера"><svg class="ic ic-16"><use href="#i-cam"/></svg><b class="alert">!</b></button>
    </div>
    <div class="ctl-mid">
      <button class="ctl" aria-label="Поднять руку"><svg class="ic ic-16"><use href="#i-hand"/></svg></button>
      <button class="ctl ctl-text ctl-off" disabled><svg class="ic ic-16"><use href="#i-screen"/></svg>Демонстрация</button>
      <button class="ctl ctl-text"><svg class="ic ic-16"><use href="#i-people"/></svg>Участники<span>2</span></button>
      <button class="ctl ctl-text"><svg class="ic ic-16"><use href="#i-send"/></svg>Чат</button>
      <button class="ctl" aria-label="Ещё"><svg class="ic ic-16"><use href="#i-more"/></svg></button>
    </div>
    <div class="ctl-right"><button class="ctl ctl-end" aria-label="Завершить"><svg class="ic ic-18"><use href="#i-end"/></svg></button></div>
  </footer>

  <!-- Панель задач -->
  <div class="taskbar">
    <div class="start"><svg class="ic"><use href="#i-win"/></svg><span>Ссылки</span></div>
    <div class="apps">
      <button class="app app-on" aria-label="Яндекс Браузер"><svg class="ic ic-16"><use href="#i-yb"/></svg></button>
      <button class="app app-run" aria-label="Проводник"><svg class="ic ic-16"><use href="#i-exp"/></svg></button>
      <button class="app app-run" aria-label="Telegram"><svg class="ic ic-18"><use href="#i-tgb"/></svg></button>
      <button class="app app-run" aria-label="Steam"><svg class="ic ic-16"><use href="#i-steam"/></svg></button>
      <button class="app app-run" aria-label="Солнце"><svg class="ic ic-16"><use href="#i-sun"/></svg></button>
      <button class="app" aria-label="Стрелка"><svg class="ic ic-16"><use href="#i-arrow"/></svg></button>
      <button class="app" aria-label="Discord"><svg class="ic ic-16"><use href="#i-disc"/></svg></button>
      <button class="app app-run" aria-label="OBS"><svg class="ic ic-16"><use href="#i-obs"/></svg></button>
    </div>
    <div class="tray">
      <svg class="ic ic-10"><use href="#i-up"/></svg><svg class="ic"><use href="#i-mic"/></svg><svg class="ic"><use href="#i-net"/></svg><svg class="ic"><use href="#i-speaker"/></svg><svg class="ic ic-16"><use href="#i-kb"/></svg>
      <span>РУС</span><time>12:46<br>22.11.2025</time>
      <span class="note"><svg class="ic"><use href="#i-note"/></svg><b>3</b></span>
    </div>
  </div>

</div>
</body>
</html>
```

FILE: styles.css
```css
* { box-sizing: border-box; }
body { margin: 0; background: #131316; color: #e8e8ec; font-family: Roboto, "Noto Sans", sans-serif; font-size: 10px; }
button, input { font: inherit; color: inherit; background: none; border: 0; padding: 0; margin: 0; }
button { display: flex; align-items: center; justify-content: center; white-space: nowrap; }
a { color: inherit; text-decoration: none; }
i { font-style: normal; }

.sprite { position: absolute; width: 0; height: 0; }
.ic { width: 12px; height: 12px; flex: none; display: block; }
.ic-s { width: 8px; height: 8px; }
.ic-10 { width: 10px; height: 10px; }
.ic-m { width: 14px; height: 14px; }
.ic-16 { width: 16px; height: 16px; }
.ic-18 { width: 18px; height: 18px; }
.caret { width: 6px; height: 6px; flex: none; }

.page { display: flex; flex-direction: column; min-height: 100vh; }

/* вкладки */
.tabs { display: flex; align-items: center; height: 24px; background: #23242f; padding: 0 3px 0 4px; }
.tab-group { display: flex; height: 20px; width: 101px; background: #373843; border-radius: 5px; margin-right: 3px; }
.group-sound { width: 21px; background: #b8b8be; color: #17171b; border-radius: 5px; }
.group-sound .ic { background: #17171b; color: #fff; border-radius: 3px; padding: 1px; }
.group-name { flex: 1; justify-content: flex-start; gap: 3px; font-size: 8px; font-weight: 500; padding-left: 5px; }
.group-name b { background: #24252f; border-radius: 4px; width: 15px; line-height: 15px; }
.group-name i { width: 1px; height: 10px; background: #555662; margin: 0 2px 0 auto; }
.group-name .ic { color: #8c8d97; margin-right: 2px; }
.tab-list { display: flex; flex: 1; min-width: 0; }
.tab { flex: 1; min-width: 0; display: flex; align-items: center; gap: 5px; height: 20px; padding: 0 4px 0 7px; font-size: 9px; color: #c4c4cd; border-right: 1px solid #3c3d48; }
.tab span { flex: 1; min-width: 0; white-space: nowrap; mask-image: linear-gradient(90deg, #000 75%, #0004); }
.tab-wide { gap: 14px; }
.tab-active { background: #45464f; color: #fff; border-radius: 5px; border-color: transparent; gap: 3px; }
.new-tab { width: 15px; height: 15px; margin: 0 4px 0 5px; border-radius: 50%; background: #3b3c46; }
.new-tab .ic { width: 10px; height: 10px; }
.win-btns { display: flex; }
.win-btns button { width: 29px; height: 20px; }
.tabs .win-btns { margin-left: 29px; }

/* адресная строка */
.address { display: flex; align-items: center; height: 28px; background: #44454f; padding: 0 3px 0 9px; }
.back { gap: 3px; width: 56px; font-size: 9px; font-weight: 500; justify-content: flex-start; }
.nav-btn { width: 29px; }
.field { flex: 1; display: grid; grid-template-columns: 1fr auto 1fr; align-items: center; height: 24px; margin: 0 6px 0 2px; padding: 0 4px; background: #33343e; border-radius: 8px; font-weight: 500; }
.host { display: flex; align-items: center; gap: 5px; }
.host .ic, .field-end { color: #b4b5be; }
.field-end { display: flex; justify-content: flex-end; gap: 8px; }
.alice { gap: 3px; height: 20px; padding: 0 7px 0 3px; background: #30313b; border-radius: 10px; font-weight: 500; margin-right: 2px; }

/* участники */
.people { display: flex; justify-content: center; gap: 6px; padding: 7px 0 6px; }
.person { width: 128px; height: 71px; display: flex; flex-direction: column; align-items: center; gap: 4px; padding-top: 7px; background: #2c2c30; border-radius: 6px; }
.person span { padding: 0 5px; line-height: 14px; border-radius: 7px; background: #1b1b1e; color: #fff; }
.person-talk { padding-top: 4px; border: 3px solid #54ec8c; }
.avatar { width: 43px; height: 43px; border-radius: 50%; display: flex; align-items: center; justify-content: center; color: #fff; font-size: 17px; }
.avatar-orange { background: #e0662f; }
.avatar-blue { background: #5030ec; }

/* демонстрация */
.stage { position: relative; flex: 1; display: flex; margin: 0 5px; padding: 0 178px; background: #2c2c30; border-radius: 6px; }
.expand { position: absolute; right: 9px; top: 9px; }
.screen { position: relative; display: flex; flex-direction: column; flex: 1; min-width: 0; }
.tabs-in { height: 23px; padding: 0; }
.in-sound { width: 23px; }
.in-sound .ic, .in-chev .ic { width: 10px; height: 10px; }
.in-group { width: 31px; height: 18px; gap: 4px; background: #a3a3a9; color: #4a4a50; border-radius: 5px; font-size: 8px; }
.in-group b { background: #26262c; color: #ddd; border-radius: 4px; padding: 1px 2px; }
.in-chev { width: 19px; height: 18px; background: #33343e; border-radius: 0 5px 5px 0; }
.mini { display: flex; }
.mini .ic { flex: 1 1 0; min-width: 0; height: 20px; padding: 4px 0; border-right: 1px solid #3a3b46; }
.mini-pin { flex: 97; padding-left: 1px; }
.mini-rest { flex: 538; }
.mini .mini-active { background: #4c4d57; border-radius: 4px; }
.new-tab-in { margin: 0 3px; }
.tabs .win-btns-in { margin-left: 25px; }
.win-btns-in button { width: 26px; }
.address-in { height: 25px; padding: 0 1px 0 9px; font-size: 9px; }
.address-in .back { width: 47px; font-size: 8px; }
.address-in .back .ic { width: 10px; height: 10px; }
.address-in .field { height: 20px; margin: 0 6px 0 0; }
.address-in .alice { height: 18px; margin-right: 6px; padding: 0 6px; }
.address-in .edit { margin-right: 11px; }

/* таблицы */
.docs { flex: 1; background: #f9fcfb; color: #333; font-size: 7px; display: flex; flex-direction: column; }
.docs-head { display: flex; align-items: center; height: 27px; padding: 0 9px; }
.docs-logo { width: 12px; height: 17px; margin-right: 6px; flex: none; }
.docs-name h1 { display: flex; align-items: center; gap: 6px; margin: 0; font-size: 8px; line-height: 12px; font-weight: 400; color: #222; }
.docs-name h1 span { margin-right: 1px; }
.docs-menu { display: flex; gap: 9px; font-size: 6px; line-height: 10px; }
.docs-actions { display: flex; align-items: center; gap: 11px; margin-left: auto; margin-right: 9px; }
.meet { display: flex; align-items: center; gap: 4px; margin-left: 2px; }
.share { gap: 4px; height: 18px; width: 99px; background: #c4e7fb; border-radius: 9px; color: #0b2c46; }
.share i { width: 1px; height: 18px; background: #f9fcfb; }
.me { width: 14px; height: 14px; border-radius: 50%; margin-left: 8px; background: radial-gradient(circle at 60% 30%, #555, #0a0a0a 70%); }
.docs-body { flex: 1; display: flex; }
.docs-main { flex: 1; min-width: 0; display: flex; flex-direction: column; }
.toolbar { display: flex; align-items: center; height: 18px; margin: 2px 7px 2px 9px; padding-left: 4px; background: #f0f4f5; border-radius: 9px; }
.toolbar button { width: 14px; height: 14px; flex: none; }
.toolbar .tb-search { width: 42px; gap: 5px; background: #fcfdfd; border-radius: 7px; color: #666; margin-right: 1px; }
.toolbar .tb-zoom { width: 32px; gap: 5px; margin: 0 3px; }
.toolbar .tb-font { width: 40px; gap: 6px; margin: 0 2px; font-size: 6px; }
.toolbar .tb-123 { font-size: 6px; margin-left: 2px; }
.toolbar .tb-18 { width: 18px; gap: 1px; }
.toolbar .tb-20 { width: 20px; gap: 1px; }
.toolbar .tb-hide { margin: 0 8px 0 auto; }
.tb-size { width: 16px; height: 11px; border: 1px solid #777; border-radius: 2px; text-align: center; }
.tb-color { text-decoration: none; border-bottom: 2px solid #000; padding: 0 2px; }
.sep { width: 1px; height: 9px; background: #d0d4d6; margin: 0 2px; }
.formula { display: flex; align-items: center; gap: 10px; height: 16px; padding-left: 6px; background: #fff; font-size: 6px; }
.formula em { font-size: 7px; color: #777; }

.grid-wrap { display: flex; background: #fff; }
.grid-view { flex: 1; min-width: 0; }
.grid { width: 100%; table-layout: fixed; border-collapse: collapse; background: #fff; font-family: "Liberation Sans", Arial, sans-serif; font-size: 10px; color: #111; }
.w20 { width: 20px; }
.w145 { width: 145px; }
.w170 { width: 170px; }
.w211 { width: 211px; }
.w58 { width: 58px; }
.w67 { width: 67px; }
.w50 { width: 50px; }
.w45 { width: 45px; }
.w63 { width: 63px; }
.grid th, .grid td { padding: 0; height: 21px; line-height: 10px; text-align: center; }
.grid tbody tr:nth-child(even) td, .grid tbody tr:nth-child(even) th { height: 20px; }
.grid td { border: 1px solid #4a4a4a; background: #fff; }
.grid td:last-child { border-right: 0; }
.grid th { border: 1px solid #dfe3e3; border-left: 0; font-size: 5px; font-weight: 400; color: #333; background: #fff; }
.grid td:nth-child(2), .grid td:nth-child(3), .grid td:nth-child(4) { background: #eee; }
.grid .letters th { height: 10px; line-height: 8px; }
.grid .letters .on, .grid .sel th { background: #d2e2fa; }
.grid .titles td, .grid .titles th { height: 14px; border-bottom: 2px solid #aaa; }
.grid .titles td:nth-child(2), .grid .titles td:nth-child(3), .grid .titles td:nth-child(4), .grid .part td:nth-child(2) { background: #b7b7b7; }
.grid .sel td:nth-child(3) { background: #d6e0f2; border-left-color: #3c68b5; border-right-color: #3c68b5; position: relative; }
.grid .last td:nth-child(3) { border-bottom-color: #3c68b5; }
.grid .first td, .grid .first th { height: 16px; }
.grid .part td { vertical-align: bottom; }
.grid .part td:nth-child(3), .grid .part td:nth-child(4) { background: #fff; }
.grid .data td { vertical-align: bottom; font-size: 8px; line-height: 9px; }
.grid .data a { color: #2a5cc0; text-decoration: underline; }
.grid .data .admin { text-align: left; font-size: 6px; padding-left: 1px; }
.grid .cut td, .grid .cut th { height: 8px; border-bottom: 0; }
.handle { position: absolute; right: -2px; bottom: -2px; width: 4px; height: 4px; border-radius: 50%; background: #2a5cc0; }
.hscroll { height: 5px; padding: 0 5px 0 20px; background: #f9fcfb; }
.hscroll i { display: block; width: 54%; height: 4px; background: #dcdfdf; }
.vscroll { width: 6px; padding-top: 36px; background: #fafcfc; }
.vscroll i { display: block; width: 5px; height: 12px; border-radius: 3px; background: #d5d7d8; }
.sheets { display: flex; align-items: center; flex: 1; padding: 2px 0 0 18px; }
.sheets button { width: 18px; }
.sheets .sheet-on { width: 48px; height: 100%; margin-left: 5px; gap: 4px; background: #e0e9f8; color: #2454a5; font-weight: 700; }
.side { width: 25px; display: flex; flex-direction: column; align-items: center; gap: 15px; padding: 7px 0 9px; }
.side i { width: 10px; height: 1px; background: #dde1e1; }
.side-fold { margin-top: auto; transform: rotate(-90deg); }

.speaker-name { position: absolute; left: 46%; bottom: 2px; padding: 0 5px; line-height: 14px; border-radius: 8px; border: 2px solid transparent; border-left-color: #39a5b2; border-right-color: #e2b32f; background: #1c1c1e; color: #fff; white-space: nowrap; }
.cursor { position: absolute; width: 10px; height: 14px; }
.cursor-me { left: 56%; top: 35%; }
.cursor-remote { left: 19%; top: 67%; width: 8px; height: 11px; }

/* управление встречей */
.controls { display: grid; grid-template-columns: 1fr auto 1fr; align-items: center; height: 43px; padding: 0 6px 0 5px; }
.ctl-left, .ctl-mid { display: flex; gap: 5px; }
.ctl { position: relative; min-width: 32px; height: 32px; border-radius: 11px; background: #3a3a3e; color: #fff; }
.ctl-left { gap: 6px; }
.ctl-text { gap: 8px; padding: 0 8px; font-weight: 700; }
.ctl-text span { width: 17px; line-height: 17px; border-radius: 50%; background: #505055; }
.ctl-off { background: #28282b; color: #68686c; font-weight: 400; }
.ctl-right { display: flex; justify-content: flex-end; }
.ctl-end { background: #460a1a; }
.alert { position: absolute; right: -4px; top: -4px; width: 13px; line-height: 13px; border-radius: 50%; background: #e64a5c; text-align: center; }

/* панель задач */
.taskbar { display: grid; grid-template-columns: 1fr auto 1fr; align-items: center; height: 27px; padding: 0 14px 0 10px; background: #101010; font-size: 9px; }
.start { display: flex; align-items: center; gap: 13px; }
.apps { display: flex; gap: 1px; height: 100%; }
.app { width: 32px; height: 100%; }
.app-on { background: #343437; }
.app-on, .app-run { border-bottom: 2px solid #6b9fc8; }
.tray { display: flex; align-items: center; justify-content: flex-end; gap: 5px; }
.tray span { font-size: 8px; }
.tray time { width: 44px; text-align: center; font-size: 8px; line-height: 12px; }
.note { position: relative; display: block; margin-left: 4px; }
.note b { position: absolute; right: -5px; bottom: -4px; width: 10px; line-height: 10px; border-radius: 50%; background: #333; font-size: 7px; text-align: center; }
.taskbar-in { grid-template-columns: 42% auto 1fr; height: 23px; background: #1c1c1c; font-size: 8px; }
.taskbar-in .start { gap: 15px; }
.taskbar-in .app { border-color: #b5b5b8; width: 26px; }
.taskbar-in .app-on { width: 30px; background: #2f2f31; }
.taskbar-in .tray span { font-size: 7px; }
.taskbar-in .tray time { font-size: 7px; line-height: 11px; }
```
